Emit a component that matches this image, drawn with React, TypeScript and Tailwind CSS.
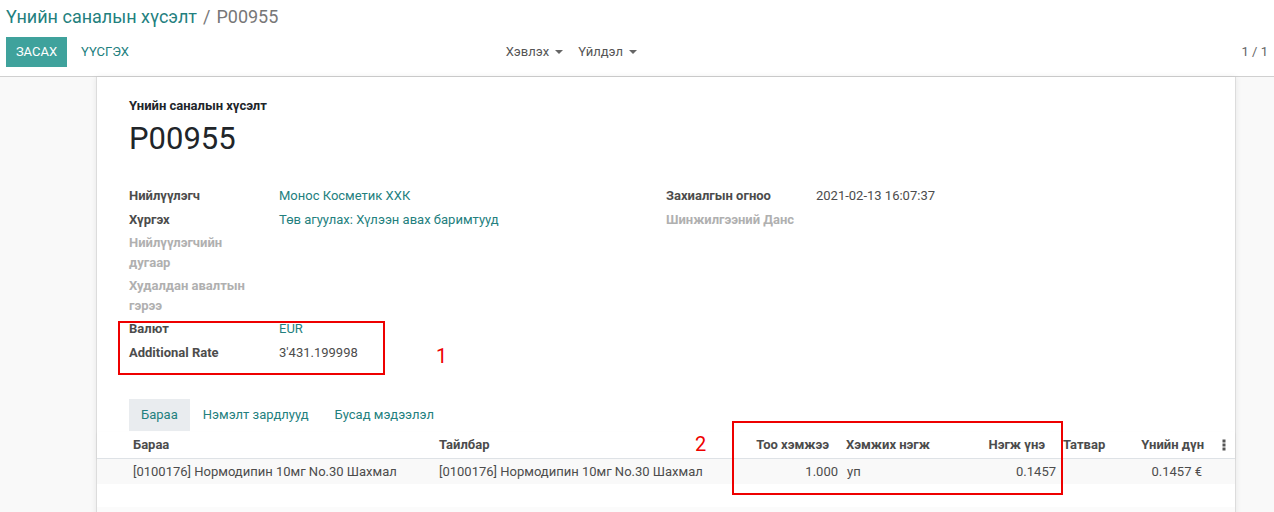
import React from 'react';

const font = { fontFamily: 'Roboto, "Noto Sans", sans-serif' };

interface Field {
  label: string;
  value?: string;
  muted?: boolean;
  link?: boolean;
}

const leftFields: Field[] = [
  { label: 'Нийлүүлэгч', value: 'Монос Косметик ХХК', link: true },
  { label: 'Хүргэх', value: 'Төв агуулах: Хүлээн авах баримтууд', link: true },
  { label: 'Нийлүүлэгчийн дугаар', muted: true },
  { label: 'Худалдан авалтын гэрээ', muted: true },
  { label: 'Валют', value: 'EUR', link: true },
  { label: 'Additional Rate', value: "3'431.199998" },
];

const rightFields: Field[] = [
  { label: 'Захиалгын огноо', value: '2021-02-13 16:07:37' },
  { label: 'Шинжилгээний Данс', muted: true },
];

const FieldGroup: React.FC<{ fields: Field[] }> = ({ fields }) => (
  <div className="flex flex-col">
    {fields.map((f) => (
      <div key={f.label} className="flex py-[2px] leading-[19.5px]">
        <div
          className={`w-[150px] shrink-0 pr-4 font-bold ${f.muted ? 'text-[#b0b0b0]' : 'text-[#4c4c4c]'}`}
        >
          {f.label}
        </div>
        <div className={f.link ? 'text-[#23807e]' : 'text-[#4c4c4c]'}>{f.value}</div>
      </div>
    ))}
  </div>
);

const Caret = () => (
  <span className="ml-[6px] inline-block h-0 w-0 border-x-[4px] border-t-[4px] border-x-transparent border-t-[#666] align-middle" />
);

const cols = 'grid grid-cols-[338px_300px_107px_108px_110px_60px_90px_25px]';

export default function App() {
  return (
    <div className="relative h-[512px] w-[1274px] overflow-hidden bg-[#f9f9f9] text-[13px] text-[#4c4c4c]" style={font}>
      {/* control panel */}
      <div className="h-[77px] border-b border-[#d0d0d0] bg-white px-[6px]">
        <div className="flex h-[33px] items-center text-[18px] leading-none">
          <span className="text-[#23807e]">Үнийн саналын хүсэлт</span>
          <span className="mx-[6px] text-[#777]">/</span>
          <span className="text-[#777]">P00955</span>
        </div>
        <div className="mt-[4px] flex h-[34px] items-start">
          <div className="flex w-[631px] items-center justify-between">
            <div className="flex items-center">
              <button className="h-[30px] w-[61px] bg-[#3fa29c] text-[13px] text-white">ЗАСАХ</button>
              <button className="h-[30px] px-[14px] text-[13px] text-[#23807e]">ҮҮСГЭХ</button>
            </div>
            <div className="flex items-center gap-[15px] text-[#555]">
              <span className="flex items-center">Хэвлэх<Caret /></span>
              <span className="flex items-center">Үйлдэл<Caret /></span>
            </div>
          </div>
          <div className="flex h-[30px] flex-1 items-center justify-end text-[#666]">1 / 1</div>
        </div>
      </div>

      {/* sheet */}
      <div className="ml-[96px] h-[460px] w-[1140px] border-x border-[#dcdcdc] bg-white shadow-[0_0_6px_rgba(0,0,0,0.08)]">
        <div className="px-[32px] pt-[20px]">
          <div className="text-[13px] font-bold leading-[18px] text-[#212529]">Үнийн саналын хүсэлт</div>
          <div className="mt-[4px] text-[31px] leading-[40px] text-[#212529]">P00955</div>
          <div className="mt-[25px] grid grid-cols-2">
            <FieldGroup fields={leftFields} />
            <FieldGroup fields={rightFields} />
          </div>
          <div className="mt-[35px] flex h-[32px] items-stretch text-[#23807e]">
            <div className="flex items-center bg-[#e9ecef] px-[12px]">Бараа</div>
            <div className="flex items-center px-[13px]">Нэмэлт зардлууд</div>
            <div className="flex items-center px-[13px]">Бусад мэдээлэл</div>
          </div>
        </div>

        {/* lines table */}
        <div className="mt-[1px]">
          <div className={`${cols} h-[27px] items-center border-b border-[#dee2e6] font-bold text-[#4c4c4c] shadow-[0_1px_2px_rgba(0,0,0,0.06)]`}>
            <div className="pl-[36px]">Бараа</div>
            <div className="pl-[4px]">Тайлбар</div>
            <div className="pr-[13px] text-right">Тоо хэмжээ</div>
            <div className="pl-[4px]">Хэмжих нэгж</div>
            <div className="pr-[15px] text-right">Нэгж үнэ</div>
            <div className="pl-[3px]">Татвар</div>
            <div className="pr-[6px] text-right">Үнийн дүн</div>
            <div className="flex justify-center pl-[2px]">
              <svg width="4" height="12" viewBox="0 0 4 12">
                <rect x="0.5" y="0.5" width="3" height="3" fill="#555" />
                <rect x="0.5" y="4.5" width="3" height="3" fill="#555" />
                <rect x="0.5" y="8.5" width="3" height="3" fill="#555" />
              </svg>
            </div>
          </div>
          <div className={`${cols} h-[25px] items-center bg-[#f9f9f9]`}>
            <div className="pl-[36px]">[0100176] Нормодипин 10мг No.30 Шахмал</div>
            <div className="pl-[4px]">[0100176] Нормодипин 10мг No.30 Шахмал</div>
            <div className="pr-[4px] text-right">1.000</div>
            <div className="pl-[5px]">уп</div>
            <div className="pr-[4px] text-right">0.1457</div>
            <div />
            <div className="pr-[8px] text-right">0.1457 €</div>
            <div />
          </div>
          <div className="h-[23px] bg-white" />
          <div className="h-[6px] bg-[#fbfbfb]" />
        </div>
      </div>

      {/* annotations */}
      <div className="absolute left-[118px] top-[321px] h-[54px] w-[267px] border-2 border-[#ee0000]" />
      <div className="absolute left-[436px] top-[346px] text-[20px] leading-none text-[#ee0000]">1</div>
      <div className="absolute left-[732px] top-[421px] h-[74px] w-[331px] border-2 border-[#ee0000]" />
      <div className="absolute left-[695px] top-[434px] text-[20px] leading-none text-[#ee0000]">2</div>
    </div>
  );
}
